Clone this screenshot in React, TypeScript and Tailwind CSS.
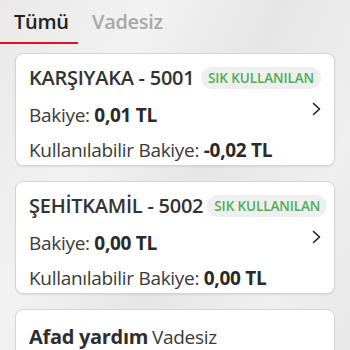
import React from 'react';

type Account = {
    name: string;
    balance: string;
    available: string;
    frequent?: boolean;
};

const accounts: Account[] = [
    { name: 'KARŞIYAKA - 5001', balance: '0,01 TL', available: '-0,02 TL', frequent: true },
    { name: 'ŞEHİTKAMİL - 5002', balance: '0,00 TL', available: '0,00 TL', frequent: true },
];

const Chevron = () => (
    <svg width="9" height="14" viewBox="0 0 9 14" fill="none" className="-mt-[12px]">
        <path d="M1.5 1.5 L7.5 7 L1.5 12.5" stroke="#1f1f1f" strokeWidth="1.6" strokeLinecap="round" strokeLinejoin="round" />
    </svg>
);

const AccountCard = ({ account }: { account: Account }) => (
    <div className="bg-white rounded-lg border border-[#d4d4d4] pl-[13px] pr-[13px] pt-[12px] pb-[3px] shadow-[0_1px_2px_rgba(0,0,0,0.08)]">
        <div className="flex items-center justify-between gap-[4px] h-[24px] whitespace-nowrap">
            <span className="text-[20px] font-semibold tracking-[-0.25px] text-[#333] leading-[24px]">{account.name}</span>
            {account.frequent && (
                <span className="bg-[#efefef] text-[#4caf50] text-[13.5px] font-semibold tracking-[-0.1px] rounded-full px-[7px] h-[22px] flex items-center">
                    SIK KULLANILAN
                </span>
            )}
        </div>
        <div className="flex items-center justify-between mt-[13px] h-[24px] text-[19px] tracking-[-0.3px] leading-[24px] text-[#3a3a3a] whitespace-nowrap">
            <div>
                Bakiye: <span className="font-bold text-[#2a2a2a]">{account.balance}</span>
            </div>
            <Chevron />
        </div>
        <div className="mt-[11px] h-[24px] text-[19px] tracking-[-0.3px] leading-[24px] text-[#3a3a3a] whitespace-nowrap">
            Kullanılabilir Bakiye: <span className="font-bold text-[#2a2a2a]">{account.available}</span>
        </div>
    </div>
);

export default function App() {
    return (
        <div className="w-[350px] h-[350px] overflow-hidden bg-[linear-gradient(115deg,#e9e9e9_0%,#f2f2f2_30%,#e6e6e6_55%,#efefef_80%,#e8e8e8_100%)] font-['Open_Sans',sans-serif]">
            <div className="flex items-end h-[44px]">
                <div className="w-[78px] h-full flex flex-col justify-between">
                    <span className="pt-[9px] pl-[14px] text-[20px] tracking-[-0.3px] leading-[26px] font-semibold text-[#222]">Tümü</span>
                    <div className="h-[2px] bg-[#d0182b]" />
                </div>
                <span className="self-start pt-[9px] pl-[14px] text-[20px] tracking-[-0.3px] leading-[26px] font-semibold text-[#a8a8a8]">Vadesiz</span>
            </div>
            <div className="px-[15px] pt-[9px] flex flex-col gap-[15px]">
                {accounts.map((a) => (
                    <AccountCard key={a.name} account={a} />
                ))}
                <div className="bg-white rounded-lg border border-[#d4d4d4] pl-[13px] pt-[15px] h-[60px] whitespace-nowrap leading-[24px] tracking-[-0.3px]">
                    <span className="text-[20px] font-bold text-[#2e2e2e]">Afad yardım</span>{' '}
                    <span className="text-[19px] text-[#3a3a3a]">Vadesiz</span>
                </div>
            </div>
        </div>
    );
}
